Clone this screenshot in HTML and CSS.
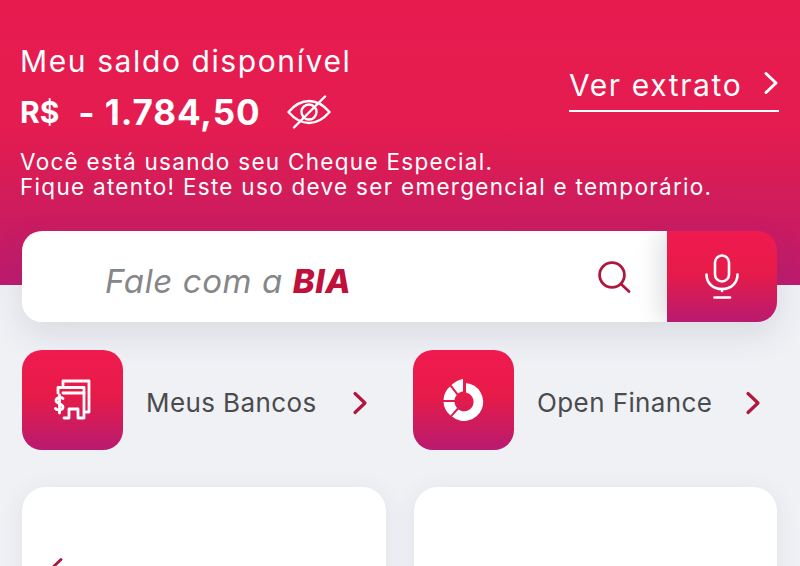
FILE: index.html
```html
<!DOCTYPE html>
<html lang="pt-BR">
<head>
<meta charset="utf-8">
<title>Saldo</title>
<link rel="stylesheet" href="styles.css">
</head>
<body>
<div class="app">
  <header class="hero">
    <div class="hero-top">
      <div class="balance">
        <div class="balance-label">Meu saldo disponível</div>
        <div class="balance-row">
          <span class="currency">R$</span>
          <span class="amount">- 1.784,50</span>
          <svg class="eye" viewBox="0 0 44 34" fill="none" stroke="#fff" stroke-width="2.400" stroke-linecap="round" stroke-linejoin="round">
            <path d="M1.500 17C8 9.500 15 6 22 6S36 9.500 42.500 17C36 24.500 29 28 22 28S8 24.500 1.500 17Z"/>
            <circle cx="22" cy="17" r="7.500"/>
            <path d="M38 1.500 7 32.500"/>
          </svg>
        </div>
      </div>
      <a class="statement">
        <span class="statement-row">
          <span>Ver extrato</span>
          <svg class="statement-chev" viewBox="0 0 16 24" fill="none" stroke="#fff" stroke-width="3" stroke-linecap="round" stroke-linejoin="round"><path d="M3 2.500 13 12 3 21.500"/></svg>
        </span>
      </a>
    </div>
    <p class="notice">Você está usando seu Cheque Especial.<br>Fique atento! Este uso deve ser emergencial e temporário.</p>
  </header>

  <main class="content">
    <div class="search">
      <div class="search-field">
        <span class="search-text">Fale com a <b>BIA</b></span>
        <svg class="search-icon" viewBox="0 0 34 34" fill="none" stroke="#b0173f" stroke-width="2.800" stroke-linecap="round"><circle cx="15" cy="15" r="12.400"/><path d="M24.500 24.500 32 31.500"/></svg>
      </div>
      <div class="mic tile-gradient">
        <svg class="mic-icon" viewBox="0 0 34 46" fill="none" stroke="#fff" stroke-width="2.600" stroke-linecap="round"><rect x="10" y="1.500" width="14" height="26" rx="7"/><path d="M1.500 20.500C1.500 29 8 35 17 35S32.500 29 32.500 20.500"/><path d="M9.500 43.500H25"/><path d="M17 35V37"/></svg>
      </div>
    </div>

    <div class="shortcuts">
      <div class="shortcut">
        <div class="tile tile-gradient">
          <svg class="tile-icon" viewBox="0 0 38 42" fill="none" stroke="#fff" stroke-width="2.800" stroke-linecap="round" stroke-linejoin="round">
            <path d="M9 6V2H35V33H32"/>
            <path d="M4 14V8.500H30V39H24V30H15V39H10"/>
            <path d="M9 14H30"/>
            <path d="M9 19.500C8 18 2 18 2 21.500C2 25 9 24.500 9 28C9 31.500 2.500 31.500 1.500 29.500"/>
            <path d="M5.500 16V34"/>
          </svg>
        </div>
        <span class="shortcut-label">Meus Bancos</span>
        <svg class="chev" viewBox="0 0 16 24" fill="none" stroke="#b0173f" stroke-width="3.200" stroke-linecap="round" stroke-linejoin="round"><path d="M3 2.500 13 12 3 21.500"/></svg>
      </div>
      <div class="shortcut">
        <div class="tile tile-gradient">
          <svg class="tile-icon donut" viewBox="0 0 42 44" fill="#fff">
            <path d="M23 5A19 19 0 1 1 9 38.500L15.500 31.500A9.500 9.500 0 1 0 23 14.500Z"/>
            <path d="M20 1V13.500C18 13.700 16.500 14.500 15 15.500L8.500 7C12 3.500 16 1.500 20 1Z"/>
            <path d="M7 8.500 13.700 17C12.500 18.500 11.800 20 11.500 22H.5C.8 16.500 3 12 7 8.500Z"/>
            <path d="M.5 24H11.500C11.800 26.500 12.500 28 14 30L7.500 37.500C3 33.500 .8 29 .5 24Z"/>
          </svg>
        </div>
        <span class="shortcut-label">Open Finance</span>
        <svg class="chev" viewBox="0 0 16 24" fill="none" stroke="#b0173f" stroke-width="3.200" stroke-linecap="round" stroke-linejoin="round"><path d="M3 2.500 13 12 3 21.500"/></svg>
      </div>
    </div>

    <div class="cards">
      <div class="card">
        <svg class="card-chev" viewBox="0 0 16 24" fill="none" stroke="#a8163f" stroke-width="2.800" stroke-linecap="round" stroke-linejoin="round"><path d="M13 2.500 3 12 13 21.500"/></svg>
      </div>
      <div class="card"></div>
    </div>
  </main>
</div>
</body>
</html>
```

FILE: styles.css
```css
* { box-sizing: border-box; }

html, body {
  margin: 0;
  height: 100%;
  overflow: hidden;
}

body {
  background: #eff1f5;
  font-family: "Inter", "Liberation Sans", sans-serif;
  color: #fff;
}

.app {
  width: 800px;
  height: 566px;
  overflow: hidden;
}

.hero {
  height: 285px;
  padding: 40px 21px 0 20px;
  background: linear-gradient(180deg, #e81b4f 0%, #e41c4f 45%, #d21c5a 68%, #bd1b6f 100%);
}

.hero-top {
  display: flex;
  justify-content: space-between;
  align-items: flex-start;
}

.balance-label {
  font-size: 30px;
  line-height: 42px;
  letter-spacing: 1.600px;
}

.balance-row {
  display: flex;
  align-items: center;
  margin-top: 10px;
  height: 40px;
  font-weight: 700;
}

.currency {
  font-size: 30px;
}

.amount {
  margin-left: 19px;
  font-size: 35px;
  letter-spacing: .9px;
}

.eye {
  width: 44px;
  height: 34px;
  margin-left: 27px;
}

.statement {
  display: block;
  width: 210px;
  margin: 23px 0 0;
  padding-bottom: 3px;
  border-bottom: 2px solid #fff;
}

.statement-row {
  display: flex;
  justify-content: space-between;
  align-items: center;
  font-size: 30px;
  line-height: 44px;
  letter-spacing: 1.600px;
}

.statement-chev {
  width: 16px;
  height: 24px;
  margin-bottom: 4px;
}

.notice {
  margin: 17px 0 0;
  font-size: 22.500px;
  line-height: 25px;
  letter-spacing: 1.290px;
}

.content {
  padding: 0 23px 0 22px;
}

.search {
  display: flex;
  height: 91px;
  margin-top: -54px;
  border-radius: 20px;
  box-shadow: 0 12px 34px rgba(60, 60, 90, .12);
  overflow: hidden;
}

.search-field {
  flex: 1;
  display: flex;
  align-items: center;
  justify-content: space-between;
  padding: 0 36px 0 83px;
  background: #fff;
}

.search-text {
  padding-top: 9px;
  font-size: 33px;
  font-style: italic;
  letter-spacing: .6px;
  color: #858688;
}

.search-text b {
  color: #c0103c;
  font-weight: 800;
}

.search-icon {
  width: 34px;
  height: 34px;
}

.mic {
  width: 110px;
  display: flex;
  align-items: center;
  justify-content: center;
  box-shadow: -6px 0 22px rgba(60, 60, 90, .18);
}

.tile-gradient {
  background: linear-gradient(180deg, #f01a50 0%, #e71b48 45%, #d01b5c 72%, #b91a70 100%);
}

.mic-icon {
  width: 34px;
  height: 46px;
}

.shortcuts {
  display: grid;
  grid-template-columns: 364px 366px;
  column-gap: 27px;
  margin-top: 28px;
}

.shortcut {
  display: flex;
  align-items: center;
}

.tile {
  width: 101px;
  height: 100px;
  border-radius: 20px;
  display: flex;
  align-items: center;
  justify-content: center;
  flex: none;
}

.tile-icon {
  width: 38px;
  height: 42px;
}

.donut {
  width: 42px;
  height: 44px;
}

.shortcut-label {
  flex: 1;
  margin-left: 23px;
  padding-top: 4px;
  font-size: 26px;
  letter-spacing: .4px;
  color: #4a4b4d;
}

.chev {
  width: 16px;
  height: 24px;
  margin: 5px 18px 0 0;
}

.cards {
  display: grid;
  grid-template-columns: 364px 363px;
  column-gap: 28px;
  margin-top: 37px;
}

.card {
  height: 160px;
  padding: 70px 0 0 26px;
  border-radius: 24px;
  background: #fff;
  box-shadow: 0 4px 24px rgba(60, 60, 90, .08);
}

.card-chev {
  display: block;
  width: 16px;
  height: 24px;
}
```
